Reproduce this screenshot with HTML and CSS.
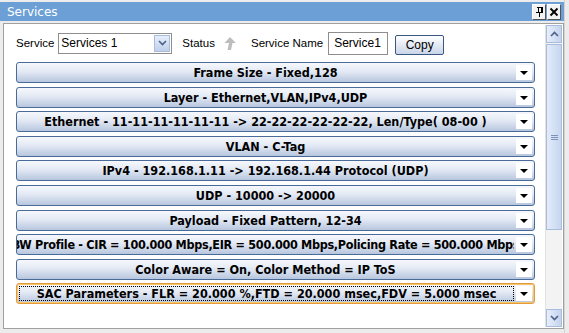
FILE: index.html
```html
<!DOCTYPE html>
<html lang="en">
<head>
    <meta charset="UTF-8">
    <title>Services</title>
    <link rel="stylesheet" href="styles.css">
</head>
<body>
    <div class="window">
        <div class="titlebar">
            <span class="title">Services</span>
            <div class="title-buttons">
                <span class="tbtn">
                    <svg width="9" height="11" viewBox="0 0 9 11"><path d="M2 1h5M3 1v5M6 1v5M7 1v5M1 6h7M4.5 6v5" stroke="#000" stroke-width="1" fill="none" shape-rendering="crispEdges"/></svg>
                </span>
                <span class="tbtn">
                    <svg width="10" height="10" viewBox="0 0 10 10"><path d="M1.5 1.5l7 7M8.5 1.5l-7 7" stroke="#000" stroke-width="1.8" fill="none"/></svg>
                </span>
            </div>
        </div>
        <div class="panel">
            <div class="content">
                <div class="toolbar">
                    <span class="label">Service</span>
                    <div class="select">
                        <span class="select-value">Services 1</span>
                        <span class="select-btn">
                            <svg width="9" height="6" viewBox="0 0 9 6"><path d="M1 1l3.5 3.5L8 1" stroke="#4d6185" stroke-width="1.6" fill="none"/></svg>
                        </span>
                    </div>
                    <span class="label status">Status</span>
                    <svg class="status-icon" width="13" height="13" viewBox="0 0 13 13"><path d="M7 0L13 6H9.5L8 13H4.5L6 6H1.5Z" fill="#bdbdbd"/></svg>
                    <span class="label name">Service Name</span>
                    <div class="textbox">Service1</div>
                    <button class="copy">Copy</button>
                </div>
                <div class="bars">
                    <div class="bar"><span class="bar-text">Frame Size - Fixed,128</span><span class="bar-arrow"></span></div>
                    <div class="bar"><span class="bar-text">Layer - Ethernet,VLAN,IPv4,UDP</span><span class="bar-arrow"></span></div>
                    <div class="bar"><span class="bar-text">Ethernet - 11-11-11-11-11-11 -&gt; 22-22-22-22-22-22, Len/Type( 08-00 )</span><span class="bar-arrow"></span></div>
                    <div class="bar"><span class="bar-text">VLAN - C-Tag</span><span class="bar-arrow"></span></div>
                    <div class="bar"><span class="bar-text">IPv4 - 192.168.1.11 -&gt; 192.168.1.44 Protocol (UDP)</span><span class="bar-arrow"></span></div>
                    <div class="bar"><span class="bar-text">UDP - 10000 -&gt; 20000</span><span class="bar-arrow"></span></div>
                    <div class="bar"><span class="bar-text">Payload - Fixed Pattern, 12-34</span><span class="bar-arrow"></span></div>
                    <div class="bar"><span class="bar-text tight">BW Profile - CIR = 100.000 Mbps,EIR = 500.000 Mbps,Policing Rate = 500.000 Mbps</span><span class="bar-arrow"></span></div>
                    <div class="bar"><span class="bar-text">Color Aware = On, Color Method = IP ToS</span><span class="bar-arrow"></span></div>
                    <div class="bar focused"><span class="bar-text">SAC Parameters - FLR = 20.000 %,FTD = 20.000 msec,FDV = 5.000 msec</span><span class="bar-arrow"></span></div>
                </div>
            </div>
            <div class="scrollbar">
                <span class="sbtn">
                    <svg width="9" height="6" viewBox="0 0 9 6"><path d="M1 5l3.5-3.5L8 5" stroke="#4d6185" stroke-width="1.6" fill="none"/></svg>
                </span>
                <div class="track">
                    <div class="thumb"><span class="grip"></span></div>
                </div>
                <span class="sbtn">
                    <svg width="9" height="6" viewBox="0 0 9 6"><path d="M1 1l3.5 3.5L8 1" stroke="#4d6185" stroke-width="1.6" fill="none"/></svg>
                </span>
            </div>
        </div>
    </div>
</body>
</html>
```

FILE: styles.css
```css
body {
    margin: 0;
    background-color: #ececec;
    font-family: "DejaVu Sans", Tahoma, sans-serif;
}

.window {
    width: 564px;
    height: 331px;
    padding-top: 2px;
    border-right: 1px solid #d4d4d4;
}

.titlebar {
    height: 19px;
    background-color: #6b9fd5;
    display: flex;
    align-items: center;
    justify-content: space-between;
    padding: 0 3px 0 7px;
}

.title {
    color: #fff;
    font-size: 12px;
}

.title-buttons {
    display: flex;
    gap: 1px;
}

.tbtn {
    width: 12px;
    height: 14px;
    background-color: #f2f2f2;
    border: 1px solid #fff;
    border-right-color: #555;
    border-bottom-color: #555;
    display: flex;
    align-items: center;
    justify-content: center;
}

.panel {
    margin: 2px 0 0 3px;
    height: 304px;
    border: 1px solid #a0a0a0;
    background-color: #fff;
    display: flex;
}

.content {
    flex: 1;
    min-width: 0;
    padding: 7px 9px 0 12px;
}

.toolbar {
    display: flex;
    align-items: center;
    height: 24px;
    font-family: "Liberation Sans", Arial, sans-serif;
    font-size: 11.5px;
}

.label {
    color: #000;
}

.select {
    margin-left: 4px;
    width: 110px;
    height: 19px;
    border: 1px solid #8e8e8e;
    display: flex;
    align-items: center;
    justify-content: space-between;
    padding-left: 2px;
    font-size: 12px;
}

.select-btn {
    width: 16px;
    height: 17px;
    margin-right: 1px;
    background: linear-gradient(#e6eefb, #bfd0ec);
    border: 1px solid #a9bcdc;
    box-sizing: border-box;
    display: flex;
    align-items: center;
    justify-content: center;
}

.status {
    margin-left: 10px;
}

.status-icon {
    margin-left: 8px;
}

.name {
    margin-left: 15px;
}

.textbox {
    margin-left: 5px;
    width: 53px;
    height: 21px;
    border: 1px solid #8e8e8e;
    padding-left: 5px;
    display: flex;
    align-items: center;
    font-size: 12px;
}

.copy {
    margin-left: 7px;
    width: 49px;
    height: 20px;
    margin-top: 3px;
    font-family: "Liberation Sans", Arial, sans-serif;
    font-size: 12px;
    border: 1px solid #3b5683;
    border-radius: 2px;
    background: linear-gradient(#ffffff, #c9d5e8);
    padding: 0;
}

.bars {
    margin-top: 7px;
    display: flex;
    flex-direction: column;
    gap: 3.6px;
}

.bar {
    height: 21px;
    box-sizing: border-box;
    border: 1px solid #4a6b99;
    border-radius: 3px;
    background: linear-gradient(#f6f8fc, #e3e9f4 45%, #b7c6de);
    display: flex;
    align-items: center;
    overflow: hidden;
    font-family: "DejaVu Sans Condensed", "DejaVu Sans", sans-serif;
    font-weight: bold;
    font-size: 12.5px;
}

.bar-text {
    flex: 1;
    min-width: 0;
    display: flex;
    justify-content: center;
    white-space: nowrap;
    overflow: hidden;
}

.bar-text.tight {
    letter-spacing: -0.3px;
}

.bar-arrow {
    flex: none;
    width: 16px;
    height: 15px;
    margin: 0 2px;
    background-color: #fff;
    position: relative;
}

.bar-arrow::after {
    content: "";
    position: absolute;
    left: 4px;
    top: 6px;
    border-left: 4px solid transparent;
    border-right: 4px solid transparent;
    border-top: 4px solid #000;
}

.focused {
    border: 1px solid #e29a3a;
    box-shadow: inset 0 0 0 1px #f7c56d;
}

.focused .bar-text {
    outline: 1px dotted #000;
    outline-offset: -1px;
    margin: 2px 0 2px 2px;
    height: 15px;
    align-items: center;
}

.scrollbar {
    flex: none;
    width: 16px;
    margin: 1px;
    display: flex;
    flex-direction: column;
    background-color: #f3f3f3;
    border-left: 1px solid #e2e2e2;
}

.sbtn {
    height: 18px;
    box-sizing: border-box;
    border: 1px solid #a9bcdc;
    background: linear-gradient(to right, #e8eefa, #c2d3ee);
    display: flex;
    align-items: center;
    justify-content: center;
}

.track {
    flex: 1;
}

.thumb {
    height: 186px;
    margin-top: 1px;
    box-sizing: border-box;
    border: 1px solid #a9bcdc;
    background: linear-gradient(to right, #e3ebf9, #c6d6f0);
    display: flex;
    align-items: center;
    justify-content: center;
}

.grip {
    width: 7px;
    height: 5px;
    background: repeating-linear-gradient(#7d93ba 0 1px, transparent 1px 2px);
}
```
